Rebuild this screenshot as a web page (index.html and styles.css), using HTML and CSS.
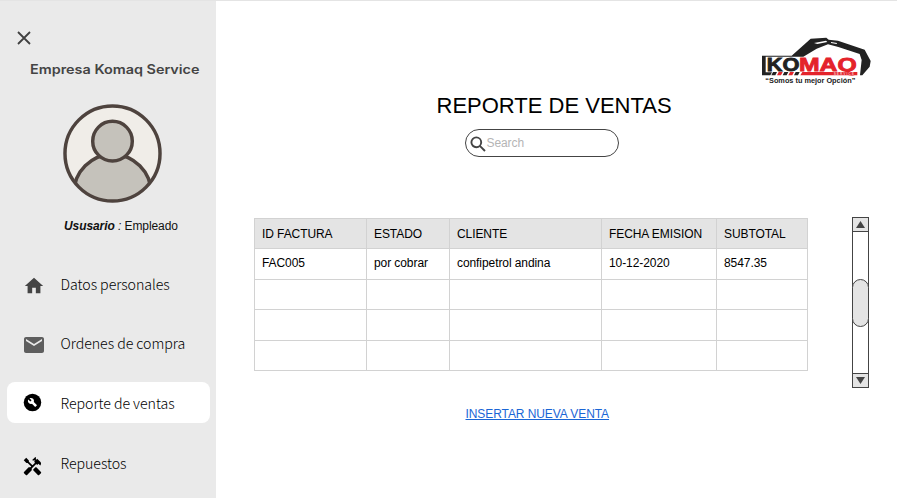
FILE: index.html
```html
<!DOCTYPE html>
<html lang="es">
<head>
<meta charset="utf-8">
<title>Reporte de ventas</title>
<link rel="stylesheet" href="styles.css">
</head>
<body>
<div class="app">
  <aside class="sidebar">
    <svg class="close" viewBox="0 0 14 14"><path d="M1 1l12 12M13 1L1 13"/></svg>
    <h2 class="company">Empresa Komaq Service</h2>
    <svg class="avatar" viewBox="0 0 100 100">
      <defs><clipPath id="face"><circle cx="50" cy="50" r="48"/></clipPath></defs>
      <circle cx="50" cy="50" r="48" fill="#f0ede8"/>
      <circle cx="50" cy="90" r="39" class="shape" clip-path="url(#face)"/>
      <circle cx="50" cy="37.500" r="20" class="shape"/>
      <circle cx="50" cy="50" r="48" class="ring"/>
    </svg>
    <p class="user"><b>Ususario</b><i> : </i>Empleado</p>
    <nav class="menu">
      <a class="item"><span class="icon"><svg class="home" viewBox="0 0 24 24"><path d="M10 20v-6h4v6h5v-8h3L12 3 2 12h3v8z"/></svg></span>Datos personales</a>
      <a class="item"><span class="icon"><svg class="mail" viewBox="0 0 24 24"><path d="M20 4H4c-1.100 0-2 .9-2 2v12c0 1.100.9 2 2 2h16c1.100 0 2-.9 2-2V6c0-1.100-.9-2-2-2zm0 4l-8 5-8-5V6l8 5 8-5v2z"/></svg></span>Ordenes de compra</a>
      <a class="item active"><span class="icon"><svg class="wrench" viewBox="0 0 24 24"><circle cx="12" cy="12" r="10"/><path fill="#fff" d="M16.900 15.490l-1.400 1.400c-.2.2-.51.2-.71 0l-3.410-3.410c-1.220.43-2.640.17-3.620-.81-1.110-1.110-1.300-2.790-.59-4.100l2.350 2.350 1.410-1.410-2.350-2.340c1.320-.71 2.990-.52 4.100.59.98.98 1.240 2.400.81 3.620l3.410 3.410c.19.19.19.51 0 .7z"/></svg></span>Reporte de ventas</a>
      <a class="item"><span class="icon"><svg class="tools" viewBox="0 0 24 24"><path d="M21.670 18.170l-5.300-5.300h-.99l-2.540 2.540v.99l5.300 5.300c.39.39 1.020.39 1.410 0l2.120-2.120c.39-.38.39-1.020 0-1.410z"/><path d="M17.340 10.190l1.410-1.410 2.120 2.120c1.170-1.170 1.170-3.070 0-4.240l-3.540-3.540-1.410 1.410V1.710l-.7-.71-3.540 3.540.71.71h2.830l-1.410 1.410 1.060 1.060-2.890 2.890-4.130-4.130V5.060L4.830 2.040 2 4.870l3.030 3.030h1.410l4.130 4.130-.85.85H7.600l-5.300 5.300c-.39.39-.39 1.020 0 1.410l2.120 2.120c.39.39 1.020.39 1.410 0l5.300-5.300v-2.120l5.150-5.150z"/></svg></span>Repuestos</a>
    </nav>
  </aside>
  <main class="main">
    <svg class="logo" viewBox="0 0 390 240">
      <path fill="#222" d="M36 107H125L182 56 229 53 236 59 264 62 344 89 362 123 359 140 337 166H330L332 147 335 120 329 102 265 81 234 73 200 86 160 110H47V157H66L61 166H36z"/>
      <path fill="#fff" d="M192 69l36-7 4 4-30 6zM243 66l18 3-1 3-17-3z"/>
      <text class="brand dark" x="50" y="153" textLength="98" lengthAdjust="spacingAndGlyphs">KO</text>
      <text class="brand red" x="147" y="153" textLength="173" lengthAdjust="spacingAndGlyphs">MAQ</text>
      <path fill="#e4232b" d="M157 156H322V166H151z"/>
      <path fill="#222" d="M69 156h12l-5 10H64zM103 156h12l-5 10H98zM137 156h12l-5 10h-12z"/>
      <path fill="#e4232b" d="M86 156h12l-5 10H81zM120 156h12l-5 10h-12z"/>
      <text class="sub" x="251" y="165" textLength="61">SERVICE</text>
      <text class="slogan" x="46" y="190" textLength="270" lengthAdjust="spacingAndGlyphs">“Somos tu mejor Opción”</text>
    </svg>
    <h1 class="title">REPORTE DE VENTAS</h1>
    <div class="search">
      <svg viewBox="0 0 16 16"><circle cx="6.300" cy="6.300" r="4.900"/><path d="M9.800 9.800l5.200 5.200"/></svg>
      <span>Search</span>
    </div>
    <div class="content">
      <table class="sales">
        <colgroup><col class="c1"><col class="c2"><col class="c3"><col class="c4"><col class="c5"></colgroup>
        <thead><tr><th>ID FACTURA</th><th>ESTADO</th><th>CLIENTE</th><th>FECHA EMISION</th><th>SUBTOTAL</th></tr></thead>
        <tbody>
          <tr><td>FAC005</td><td>por cobrar</td><td>confipetrol andina</td><td>10-12-2020</td><td>8547.35</td></tr>
          <tr><td></td><td></td><td></td><td></td><td></td></tr>
          <tr><td></td><td></td><td></td><td></td><td></td></tr>
          <tr><td></td><td></td><td></td><td></td><td></td></tr>
        </tbody>
      </table>
      <div class="scroll">
        <span class="btn"><svg viewBox="0 0 9 7"><path d="M4.500 0L9 7H0z"/></svg></span>
        <span class="thumb"></span>
        <span class="btn"><svg viewBox="0 0 9 7"><path d="M0 0h9L4.500 7z"/></svg></span>
      </div>
    </div>
    <a class="insert">INSERTAR NUEVA VENTA</a>
  </main>
</div>
</body>
</html>
```
FILE: styles.css
```css
* { box-sizing: border-box; }
body { margin: 0; background: #fff; font-family: "Liberation Sans", Arial, sans-serif; font-size: 12px; letter-spacing: -0.080px; color: #000; }
.app { display: flex; width: 897px; height: 498px; overflow: hidden; border-top: 1px solid #e4e4e4; }
.sidebar { width: 216px; background: #eaeaea; display: flex; flex-direction: column; flex: none; }
.close { width: 14px; height: 14px; margin: 30px 0 0 17px; fill: none; stroke: #404040; stroke-width: 1.800; }
.company { margin: 17px 0 0 30px; height: 16px; line-height: 16px; font-family: Inter, sans-serif; font-size: 12.800px; font-weight: 600; letter-spacing: 0; color: #444; white-space: nowrap; transform: scaleX(1.125); transform-origin: 0 50%; }
.avatar { width: 99px; height: 99px; margin: 26px 0 0 63px; fill: none; }
.shape { fill: #c5c2bb; stroke: #4e433e; stroke-width: 3.500; }
.ring { stroke: #4e433e; stroke-width: 3.500; }
.user { margin: 15px 0 0 64px; height: 16px; line-height: 16px; color: #111; white-space: pre; }
.user b { font-style: italic; }
.menu { margin: 29px 6px 0 7px; display: flex; flex-direction: column; gap: 18.700px; }
.item { height: 41px; flex: none; display: flex; align-items: center; border-radius: 8px; font-family: "Noto Sans CJK SC", sans-serif; font-size: 14.200px; font-weight: 300; letter-spacing: -0.050px; color: #000; line-height: 20px; white-space: nowrap; }
.active { background: #fff; }
.icon { width: 53.500px; padding-left: 15px; display: flex; }
.icon svg { display: block; flex: none; }
.home { width: 22px; height: 22px; fill: #444; margin: 4px 0 0 0.500px; }
.mail { width: 24px; height: 24px; fill: #5e5e5e; margin-top: 3px; }
.wrench { width: 21px; height: 21px; }
.tools { width: 21px; height: 21px; margin-top: 8px; }
.main { flex: 1; display: flex; flex-direction: column; padding-left: 38px; }
.logo { width: 130px; height: 80px; margin: 19px 0 0 496px; flex: none; letter-spacing: 0; }
.brand { font: bold 56px "Liberation Sans", Arial, sans-serif; stroke-width: 2.500; }
.dark { fill: #222; stroke: #222; }
.red { fill: #e4232b; stroke: #e4232b; }
.sub { font: bold 10px "Liberation Sans", Arial, sans-serif; fill: #f5b8ba; }
.slogan { font: bold 22px "Liberation Sans", Arial, sans-serif; fill: #222; }
.title { margin: -7px 0 0 182.500px; height: 26px; line-height: 26px; font-size: 22px; font-weight: 400; letter-spacing: 0; white-space: nowrap; }
.search { margin: 10px 0 0 211px; width: 154px; height: 28px; border: 1px solid #444; border-radius: 14px; display: flex; align-items: center; padding-left: 4px; gap: 0.500px; color: #b5b5b5; }
.search svg { width: 16px; height: 16px; fill: none; stroke: #444; stroke-width: 1.900; margin-top: 1px; }
.content { display: flex; margin-top: 60px; gap: 44px; }
.sales { width: 554px; height: 153px; margin: 1px 0 0 0; border-collapse: collapse; table-layout: fixed; }
.sales th, .sales td { border: 1px solid #d2d2d2; padding: 0 0 2px 7px; text-align: left; font-weight: 400; height: 30.400px; white-space: nowrap; }
.sales th { background: #e4e4e4; padding-bottom: 0; }
.c1 { width: 112px; } .c2 { width: 83px; } .c3 { width: 152px; } .c4 { width: 115px; } .c5 { width: 91px; }
.scroll { width: 17px; height: 171px; border: 1px solid #444; display: flex; flex-direction: column; justify-content: space-between; }
.btn { height: 14px; background: #e4e4e4; display: flex; align-items: center; justify-content: center; border-bottom: 1px solid #444; }
.btn:last-child { border-bottom: 0; border-top: 1px solid #444; }
.btn svg { width: 9px; height: 7px; fill: #444; }
.thumb { height: 48px; margin: 0 -1px; border: 1px solid #444; border-radius: 9px; background: #e4e4e4; }
.insert { margin: 18px 0 0 211.500px; line-height: 16px; color: #1a66d6; text-decoration: underline; white-space: nowrap; align-self: flex-start; }
```
